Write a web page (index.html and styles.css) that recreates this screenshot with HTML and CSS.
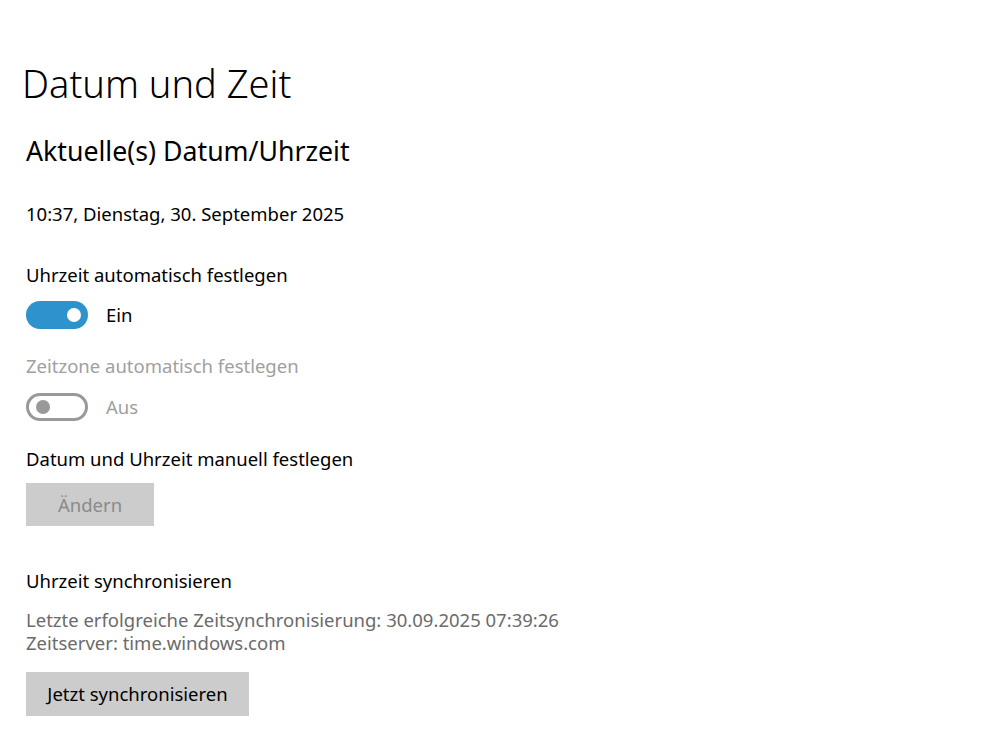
FILE: index.html
```html
<!DOCTYPE html>
<html lang="de">
<head>
<meta charset="utf-8">
<title>Datum und Zeit</title>
<link rel="stylesheet" href="styles.css">
</head>
<body>
<main class="page">
  <h1 class="title">Datum und Zeit</h1>
  <h2 class="subtitle">Aktuelle(s) Datum/Uhrzeit</h2>
  <p class="now">10:37, Dienstag, 30. September 2025</p>

  <div class="setting first">
    <div class="label">Uhrzeit automatisch festlegen</div>
    <div class="toggle-row">
      <span class="toggle on"><span class="knob"></span></span>
      <span class="state">Ein</span>
    </div>
  </div>

  <div class="setting disabled">
    <div class="label">Zeitzone automatisch festlegen</div>
    <div class="toggle-row">
      <span class="toggle off"><span class="knob"></span></span>
      <span class="state">Aus</span>
    </div>
  </div>

  <div class="setting manual">
    <div class="label">Datum und Uhrzeit manuell festlegen</div>
    <button class="btn btn-disabled">Ändern</button>
  </div>

  <div class="sync">
    <div class="label">Uhrzeit synchronisieren</div>
    <p class="info">Letzte erfolgreiche Zeitsynchronisierung: 30.09.2025 07:39:26<br>Zeitserver: time.windows.com</p>
    <button class="btn btn-sync">Jetzt synchronisieren</button>
  </div>
</main>
</body>
</html>
```
FILE: styles.css
```css
html, body {
  margin: 0;
  padding: 0;
  background: #ffffff;
}
body {
  font-family: "Noto Sans", "Open Sans", sans-serif;
  color: #000000;
}
.page {
  padding: 57px 0 0 26px;
  display: flex;
  flex-direction: column;
}
.title {
  margin: 0 0 0 -4px;
  font-size: 38px;
  font-weight: 300;
  line-height: 52px;
}
.subtitle {
  margin: 24px 0 0 0;
  font-size: 26.7px;
  font-weight: 400;
  line-height: 36px;
}
.now {
  margin: 32px 0 0 0;
  font-size: 18.5px;
  line-height: 26px;
}
.setting {
  display: flex;
  flex-direction: column;
}
.setting.first {
  margin-top: 35px;
}
.setting.disabled {
  margin-top: 24px;
}
.setting.manual {
  margin-top: 25px;
}
.label {
  font-size: 18.5px;
  line-height: 26px;
}
.toggle-row {
  margin-top: 13px;
  display: flex;
  align-items: center;
  gap: 18px;
  height: 28px;
}
.disabled .toggle-row {
  margin-top: 14px;
}
.toggle {
  box-sizing: border-box;
  width: 62px;
  height: 28px;
  border-radius: 14px;
  display: flex;
  align-items: center;
}
.toggle.on {
  background: #2e93cc;
  justify-content: flex-end;
  padding-right: 7px;
}
.toggle.off {
  border: 3px solid #999999;
  padding-left: 7px;
}
.knob {
  width: 14px;
  height: 14px;
  border-radius: 50%;
}
.toggle.on .knob { background: #ffffff; }
.toggle.off .knob { background: #999999; }
.state {
  font-size: 18.5px;
  line-height: 26px;
}
.disabled .label,
.disabled .state {
  color: #a0a0a0;
}
.btn {
  align-self: flex-start;
  border: none;
  background: #cccccc;
  font-family: inherit;
  font-size: 18.5px;
  line-height: 26px;
  color: #000000;
  padding: 0;
}
.btn-disabled {
  margin-top: 11px;
  width: 128px;
  height: 43px;
  color: #8a8a8a;
}
.sync {
  margin-top: 42px;
  display: flex;
  flex-direction: column;
}
.info {
  margin: 14px 0 0 0;
  font-size: 18.5px;
  line-height: 23px;
  color: #6b6b6b;
}
.btn-sync {
  margin-top: 18px;
  width: 223px;
  height: 44px;
}
```
